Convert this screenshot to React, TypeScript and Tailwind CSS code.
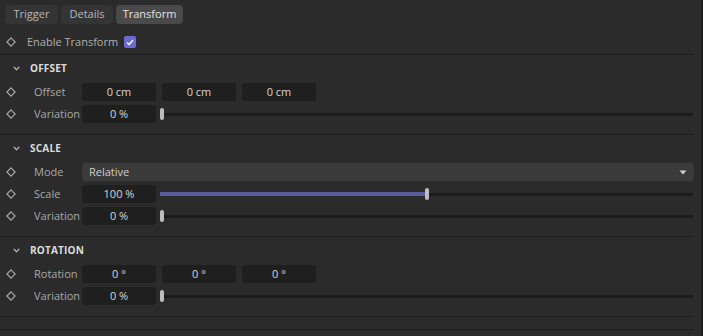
import { ReactNode } from "react";

const font = { fontFamily: '"Open Sans", "Noto Sans", sans-serif' };

const Diamond = () => (
  <svg width="10" height="10" viewBox="0 0 10 10" className="shrink-0">
    <path d="M5 0.9 L9.1 5 L5 9.1 L0.9 5 Z" fill="none" stroke="#a8a8a8" strokeWidth="1.2" />
  </svg>
);

const Chevron = () => (
  <svg width="7" height="5" viewBox="0 0 7 5" className="shrink-0">
    <path d="M0.8 0.8 L3.5 3.8 L6.2 0.8" fill="none" stroke="#cfcfcf" strokeWidth="1.1" />
  </svg>
);

const Field = ({ value }: { value: string }) => (
  <div className="w-[74px] h-[18px] shrink-0 rounded-[3px] bg-[#1f1f1f] text-[#d6d6d6] text-[11px] flex items-center justify-center">
    {value}
  </div>
);

const Slider = ({ pct }: { pct: number }) => (
  <div className="flex-1 relative h-[18px] ml-[4px] mr-[1px] flex items-center">
    <div className="w-full h-[3px] bg-[#1c1c1c]" />
    {pct > 0 && (
      <div className="absolute left-0 h-[4px] bg-[#5b5b9c]" style={{ width: `${pct}%` }} />
    )}
    <div
      className="absolute w-[4px] h-[12px] rounded-[2px] bg-[#bdbdbd]"
      style={{ left: `calc(${pct}% - ${pct > 0 ? 2 : 0}px)` }}
    />
  </div>
);

const Row = ({ label, children }: { label: string; children: ReactNode }) => (
  <div className="h-[22px] flex items-center">
    <div className="w-[82px] shrink-0 flex items-center pl-[6px] gap-[18px]">
      <Diamond />
      <span className="text-[11px] text-[#a9a9a9]">{label}</span>
    </div>
    {children}
  </div>
);

const Section = ({ title, children }: { title: string; children: ReactNode }) => (
  <div className="pb-[9px] border-b border-[#1e1e1e] mr-[7px]">
    <div className="h-[26px] flex items-center pl-[13px] gap-[10px]">
      <Chevron />
      <span className="text-[10px] font-bold text-[#dcdcdc] tracking-[0.2px]">{title}</span>
    </div>
    {children}
  </div>
);

export default function App() {
  return (
    <div className="w-[703px] h-[336px] bg-[#2b2b2b] flex overflow-hidden" style={font}>
      <div className="flex-1 flex flex-col">
        <div className="h-[30px] pt-[5px] pl-[5px] flex gap-[3px]">
          <div className="w-[53px] h-[19px] rounded-[4px] bg-[#343434] text-[#b8b8b8] text-[11px] flex items-center justify-center">
            Trigger
          </div>
          <div className="w-[52px] h-[19px] rounded-[4px] bg-[#343434] text-[#b8b8b8] text-[11px] flex items-center justify-center">
            Details
          </div>
          <div className="w-[67px] h-[19px] rounded-[4px] bg-[#4a4a4a] text-[#e2e2e2] text-[11px] flex items-center justify-center">
            Transform
          </div>
        </div>

        <div className="h-[25px] flex items-center pl-[6px] border-b border-[#1e1e1e] mr-[7px]">
          <Diamond />
          <span className="ml-[11px] text-[11px] text-[#b0b0b0]">Enable Transform</span>
          <div className="ml-[6px] w-[12px] h-[12px] rounded-[2px] bg-[#6c6ad2] flex items-center justify-center">
            <svg width="8" height="7" viewBox="0 0 8 7">
              <path d="M1 3.6 L3 5.5 L7 1.2" fill="none" stroke="#ffffff" strokeWidth="1.4" />
            </svg>
          </div>
        </div>

        <Section title="OFFSET">
          <Row label="Offset">
            <div className="flex gap-[6px]">
              <Field value="0 cm" />
              <Field value="0 cm" />
              <Field value="0 cm" />
            </div>
          </Row>
          <Row label="Variation">
            <Field value="0 %" />
            <Slider pct={0} />
          </Row>
        </Section>

        <Section title="SCALE">
          <Row label="Mode">
            <div className="flex-1 h-[18px] rounded-[3px] bg-[#3a3a3a] flex items-center justify-between pl-[7px] pr-[7px]">
              <span className="text-[11px] text-[#cfcfcf]">Relative</span>
              <svg width="8" height="5" viewBox="0 0 8 5">
                <path d="M0.5 0.5 L7.5 0.5 L4 4.5 Z" fill="#d0d0d0" />
              </svg>
            </div>
          </Row>
          <Row label="Scale">
            <Field value="100 %" />
            <Slider pct={50.1} />
          </Row>
          <Row label="Variation">
            <Field value="0 %" />
            <Slider pct={0} />
          </Row>
        </Section>

        <Section title="ROTATION">
          <Row label="Rotation">
            <div className="flex gap-[6px]">
              <Field value="0 °" />
              <Field value="0 °" />
              <Field value="0 °" />
            </div>
          </Row>
          <Row label="Variation">
            <Field value="0 %" />
            <Slider pct={0} />
          </Row>
        </Section>

        <div className="h-[13px] border-b border-[#1e1e1e] mr-[7px]" />
      </div>
      <div className="w-[2px] bg-[#1e1e1e]" />
    </div>
  );
}
